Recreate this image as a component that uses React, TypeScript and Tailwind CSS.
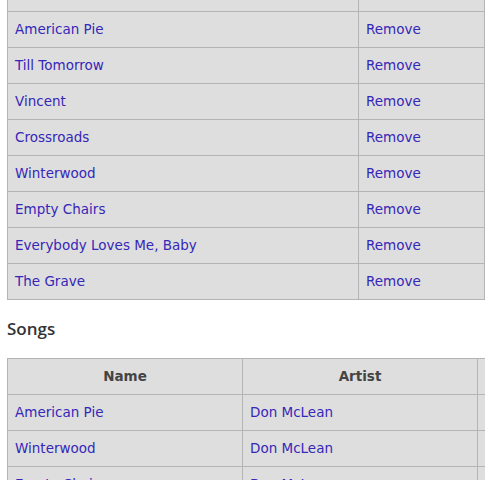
const playlist = [
  "American Pie",
  "Till Tomorrow",
  "Vincent",
  "Crossroads",
  "Winterwood",
  "Empty Chairs",
  "Everybody Loves Me, Baby",
  "The Grave",
];

const songs = [
  { name: "American Pie", artist: "Don McLean" },
  { name: "Winterwood", artist: "Don McLean" },
  { name: "Empty Chairs", artist: "Don McLean" },
];

const cell = "h-[36px] border border-[#b4b4b4] bg-[#dedede] px-[7px] align-middle";
const td = cell + " text-left";
const th = cell + " w-[235px] text-center font-bold text-[#444]";
const link = "text-[#3527b8]";

export default function App() {
  return (
    <div className="h-[480px] w-[487px] overflow-hidden bg-white text-[13.5px] font-['DejaVu_Sans',Verdana,sans-serif]">
      <div className="ml-[7px] w-[478px] -mt-[25px]">
        <table className="w-full border-collapse">
          <tbody>
            <tr>
              <td className={td + " w-[351px]"}></td>
              <td className={td}></td>
            </tr>
            {playlist.map((title) => (
              <tr key={title}>
                <td className={td}>
                  <a className={link} href="#">{title}</a>
                </td>
                <td className={td}>
                  <a className={link} href="#">Remove</a>
                </td>
              </tr>
            ))}
          </tbody>
        </table>
      </div>

      <h2 className="ml-[7px] mt-[17px] text-[17px] font-semibold text-[#333] font-['Open_Sans',sans-serif] leading-[24px]">
        Songs
      </h2>

      <div className="ml-[7px] mt-[17px] w-[478px] overflow-hidden">
        <table className="w-[560px] border-collapse">
          <thead>
            <tr>
              <th className={th}>Name</th>
              <th className={th}>Artist</th>
              <th className={td}></th>
            </tr>
          </thead>
          <tbody>
            {songs.map((s) => (
              <tr key={s.name}>
                <td className={td}>
                  <a className={link} href="#">{s.name}</a>
                </td>
                <td className={td}>
                  <a className={link} href="#">{s.artist}</a>
                </td>
                <td className={td}></td>
              </tr>
            ))}
          </tbody>
        </table>
      </div>
    </div>
  );
}
